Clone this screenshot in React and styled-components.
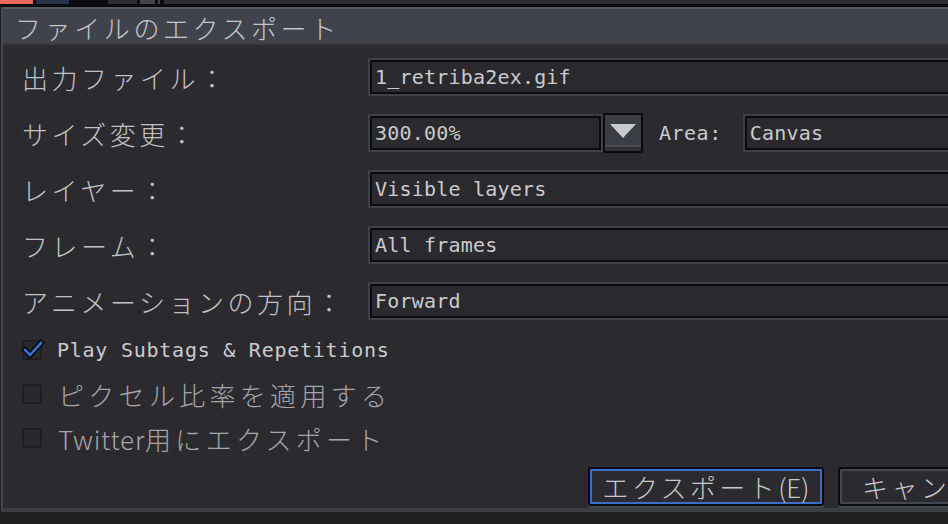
import React from 'react';
import styled, { createGlobalStyle } from 'styled-components';

const Global = createGlobalStyle`
  html, body { margin: 0; padding: 0; background: #1e1e21; overflow: hidden; }
  #root { width: 948px; height: 524px; overflow: hidden; }
`;

const jp = `"Noto Sans CJK JP", "Noto Sans", sans-serif`;
const pix = `"DejaVu Sans Mono", "Liberation Mono", monospace`;

const Screen = styled.div`
  width: 948px;
  height: 524px;
  overflow: hidden;
  background: #1e1e21;
  display: flex;
  flex-direction: column;
`;

const TabStrip = styled.div`
  height: 4px;
  flex: none;
  display: flex;
  background: #0c0c0e;
  border-bottom: 3px solid #0c0c0e;
`;

const Tab = styled.div`
  flex: ${p => (p.$grow ? 1 : 'none')};
  width: ${p => p.$w || 0}px;
  margin-left: ${p => p.$ml || 0}px;
  background: ${p => p.$c};
`;

const Dialog = styled.div`
  width: 1100px;
  flex: none;
  margin-left: 1px;
  border-left: 2px solid #474950;
  border-bottom: 4px solid #3c3e45;
  display: flex;
  flex-direction: column;
`;

const TitleBar = styled.div`
  height: 38px;
  box-sizing: border-box;
  background: #40434b;
  border-top: 2px solid #575a61;
  border-bottom: 2px solid #383a40;
  padding: 3px 0 0 12px;
  display: flex;
  align-items: center;
  font-family: ${jp};
  font-size: 26px;
  font-weight: 300;
  letter-spacing: 3.6px;
  color: #c6c6c8;
`;

const Body = styled.div`
  background: #2b2a2f;
  padding: 13px 29px 2px 19px;
  display: flex;
  flex-direction: column;
`;

const Form = styled.div`
  display: grid;
  grid-template-columns: 346px 1fr;
  grid-auto-rows: 38px;
  row-gap: 18px;
`;

const Label = styled.div`
  display: flex;
  align-items: center;
  font-family: ${jp};
  font-size: 26px;
  font-weight: 300;
  letter-spacing: 3.5px;
  color: #c2c2c4;
  white-space: nowrap;
`;

const Field = styled.div`
  box-sizing: border-box;
  height: 38px;
  width: ${p => (p.$w ? `${p.$w}px` : 'auto')};
  flex: ${p => (p.$w ? 'none' : 1)};
  margin-left: ${p => p.$ml || 0}px;
  background: #2a292e;
  border: 2px solid #3e4047;
  box-shadow: inset 0 0 0 2px #0b0b0d;
  padding-left: 5px;
  display: flex;
  align-items: center;
  font-family: ${pix};
  font-size: 20px;
  letter-spacing: 0.2px;
  color: #cbcbcd;
  white-space: nowrap;
`;

const FieldRow = styled.div`
  display: flex;
  align-items: center;
`;

const DropButton = styled.div`
  box-sizing: border-box;
  flex: none;
  width: 40px;
  height: 40px;
  background: #3b3d44;
  border: 2px solid #0b0b0d;
  border-radius: 2px;
  box-shadow: inset 0 -4px 0 #2f3136, inset 0 -6px 0 #4a4c53;
  display: flex;
  align-items: flex-start;
  justify-content: center;
  padding-top: 9px;
`;

const PixText = styled.span`
  font-family: ${pix};
  font-size: 20px;
  letter-spacing: ${p => p.$ls || 0.2}px;
  color: #cbcbcd;
  margin-left: ${p => p.$ml || 0}px;
  white-space: nowrap;
`;

const Checks = styled.div`
  margin-top: 8px;
  display: flex;
  flex-direction: column;
`;

const CheckRow = styled.div`
  height: 44px;
  display: flex;
  align-items: center;
  gap: ${p => p.$gap || 16}px;
`;

const Box = styled.div`
  box-sizing: border-box;
  flex: none;
  width: 20px;
  height: 20px;
  border: 2px solid #1f1e23;
  border-radius: 3px;
  background: #29282d;
  position: relative;
`;

const CheckSvg = styled.svg`
  position: absolute;
  left: -3px;
  top: -4px;
`;

const CheckLabel = styled.span`
  font-family: ${jp};
  font-size: 26px;
  font-weight: 300;
  letter-spacing: 4.3px;
  color: #a6a6a8;
  white-space: nowrap;
`;

const Latin = styled.span`
  letter-spacing: ${p => p.$ls || 0}px;
`;

const Buttons = styled.div`
  margin-top: 7px;
  display: flex;
  justify-content: flex-end;
  gap: 14px;
`;

const Button = styled.div`
  box-sizing: border-box;
  width: 236px;
  height: 39px;
  border: 2px solid #0b0b0d;
  border-radius: 3px;
  background: #2b2a2f;
  box-shadow: inset 0 0 0 2px ${p => (p.$focus ? '#3d6dcb' : '#45474e')}, 0 2px 0 #44464d;
  display: flex;
  align-items: center;
  justify-content: ${p => (p.$focus ? 'center' : 'flex-start')};
  padding-left: ${p => (p.$focus ? 0 : 22)}px;
  font-family: ${jp};
  font-size: 26px;
  font-weight: 300;
  letter-spacing: 3.4px;
  color: #c8c8ca;
  white-space: nowrap;
  overflow: hidden;
`;

const Triangle = () => (
  <svg width="26" height="14" viewBox="0 0 26 14">
    <polygon points="0,0 26,0 13,14" fill="#c9c9cb" />
  </svg>
);

const CheckMark = () => (
  <CheckSvg width="24" height="24" viewBox="0 0 24 24">
    <polyline points="4,12 9,17 20,5" fill="none" stroke="#0b0b0d" strokeWidth="6" strokeLinecap="square" />
    <polyline points="4,12 9,17 20,5" fill="none" stroke="#3e72d6" strokeWidth="2.5" strokeLinecap="square" />
  </CheckSvg>
);

export default function App() {
  return (
    <>
      <Global />
      <Screen>
        <TabStrip>
          <Tab $w={33} $c="#ef675f" />
          <Tab $w={33} $ml={3} $c="#28334d" />
          <Tab $w={29} $ml={39} $c="#2c2c30" />
          <Tab $w={15} $ml={3} $c="#444448" />
          <Tab $w={2} $ml={3} $c="#444448" />
          <Tab $grow $ml={4} $c="#2c2c30" />
        </TabStrip>
        <Dialog>
          <TitleBar>ファイルのエクスポート</TitleBar>
          <Body>
            <Form>
              <Label>出力ファイル：</Label>
              <FieldRow>
                <Field>1_retriba2ex.gif</Field>
              </FieldRow>

              <Label>サイズ変更：</Label>
              <FieldRow>
                <Field $w={235}>300.00%</Field>
                <DropButton>
                  <Triangle />
                </DropButton>
                <PixText $ml={16} $ls={0.5}>Area:</PixText>
                <Field $ml={21}>Canvas</Field>
              </FieldRow>

              <Label>レイヤー：</Label>
              <FieldRow>
                <Field>Visible layers</Field>
              </FieldRow>

              <Label>フレーム：</Label>
              <FieldRow>
                <Field>All frames</Field>
              </FieldRow>

              <Label>アニメーションの方向：</Label>
              <FieldRow>
                <Field>Forward</Field>
              </FieldRow>
            </Form>

            <Checks>
              <CheckRow $gap={15}>
                <Box>
                  <CheckMark />
                </Box>
                <PixText $ls={0.75}>Play Subtags &amp; Repetitions</PixText>
              </CheckRow>
              <CheckRow>
                <Box />
                <CheckLabel>ピクセル比率を適用する</CheckLabel>
              </CheckRow>
              <CheckRow>
                <Box />
                <CheckLabel>
                  <Latin $ls={0.8}>Twitter</Latin>用にエクスポート
                </CheckLabel>
              </CheckRow>
            </Checks>

            <Buttons>
              <Button $focus>
                エクスポート<Latin>(E)</Latin>
              </Button>
              <Button>キャンセル</Button>
            </Buttons>
          </Body>
        </Dialog>
      </Screen>
    </>
  );
}
